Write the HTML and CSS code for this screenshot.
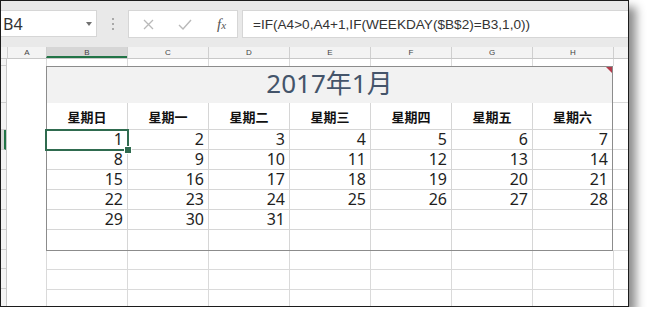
FILE: index.html
```html
<!DOCTYPE html>
<html lang="zh-CN">
<head>
  <meta charset="UTF-8" />
  <title>万年历 2017年1月</title>
  <link rel="stylesheet" href="styles.css">
</head>
<body>

  <div class="ventana">
    <div class="franja"></div>

    <div class="barra-formula">
      <div class="cuadro-nombre">
        <span>B4</span>
        <span class="flecha"></span>
      </div>
      <div class="puntos"><i></i><i></i><i></i></div>
      <div class="botones">
        <svg width="11" height="11" viewBox="0 0 11 11"><path d="M1 1L10 10M10 1L1 10" stroke="#b9b9b9" stroke-width="1.3" fill="none"/></svg>
        <svg width="14" height="11" viewBox="0 0 14 11"><path d="M1 6L5 10L13 1" stroke="#b9b9b9" stroke-width="1.4" fill="none"/></svg>
        <span class="fx">f<small>x</small></span>
      </div>
      <div class="formula">=IF(A4&gt;0,A4+1,IF(WEEKDAY($B$2)=B3,1,0))</div>
    </div>

    <div class="hueco"></div>

    <!-- cabecera de columnas -->
    <div class="cab-columnas">
      <div class="esquina"></div>
      <div class="letra col-a">A</div>
      <div class="letra activa">B</div>
      <div class="letra">C</div>
      <div class="letra">D</div>
      <div class="letra">E</div>
      <div class="letra">F</div>
      <div class="letra">G</div>
      <div class="letra">H</div>
      <div class="letra col-i"></div>
    </div>

    <div class="hoja">
      <div class="cab-filas">
        <div style="height:7px"></div>
        <div style="height:37px"></div>
        <div style="height:27px"></div>
        <div class="activa"></div>
        <div></div>
        <div></div>
        <div></div>
        <div></div>
        <div></div>
        <div style="height:19px"></div>
        <div></div>
        <div class="resto"></div>
      </div>

      <div class="cuerpo-a"></div>

      <div class="celdas">
        <div class="fila fila-1">
          <div></div><div></div><div></div><div></div><div></div><div></div><div></div><div></div>
        </div>

        <div class="bloque">
          <div class="calendario">
            <div class="titulo">2017年1月</div>
            <div class="semana dias">
              <div>星期日</div><div>星期一</div><div>星期二</div><div>星期三</div><div>星期四</div><div>星期五</div><div>星期六</div>
            </div>
            <div class="semana">
              <div class="seleccion">1</div><div>2</div><div>3</div><div>4</div><div>5</div><div>6</div><div>7</div>
            </div>
            <div class="semana">
              <div>8</div><div>9</div><div>10</div><div>11</div><div>12</div><div>13</div><div>14</div>
            </div>
            <div class="semana">
              <div>15</div><div>16</div><div>17</div><div>18</div><div>19</div><div>20</div><div>21</div>
            </div>
            <div class="semana">
              <div>22</div><div>23</div><div>24</div><div>25</div><div>26</div><div>27</div><div>28</div>
            </div>
            <div class="semana">
              <div>29</div><div>30</div><div>31</div><div></div><div></div><div></div><div></div>
            </div>
            <div class="semana">
              <div></div><div></div><div></div><div></div><div></div><div></div><div></div>
            </div>
          </div>

          <div class="col-i-pila">
            <div style="height:37px"></div>
            <div style="height:27px"></div>
            <div></div><div></div><div></div><div></div><div></div>
            <div style="height:21px"></div>
          </div>
        </div>

        <div class="fila" style="height:19px">
          <div></div><div></div><div></div><div></div><div></div><div></div><div></div><div></div>
        </div>
        <div class="fila">
          <div></div><div></div><div></div><div></div><div></div><div></div><div></div><div></div>
        </div>
        <div class="fila resto">
          <div></div><div></div><div></div><div></div><div></div><div></div><div></div><div></div>
        </div>
      </div>
    </div>
  </div>

</body>
</html>
```

FILE: styles.css
```css
* {
  box-sizing: border-box;
}

body {
  margin: 0;
  background: #fff;
  font-family: "Noto Sans", "Noto Sans CJK SC", sans-serif;
  color: #222;
}

.ventana {
  width: 629px;
  height: 307px;
  border: 1px solid #1c1c1c;
  background: #e9e9e9;
  box-shadow: 7px 7px 9px rgba(0,0,0,0.45);
  display: flex;
  flex-direction: column;
  overflow: hidden;
}

.franja {
  height: 9px;
}

/* barra de formulas */
.barra-formula {
  height: 28px;
  display: flex;
}

.cuadro-nombre {
  width: 96px;
  height: 27px;
  background: #fff;
  border: 1px solid #d6d6d6;
  border-left: none;
  display: flex;
  align-items: center;
  justify-content: space-between;
  padding: 0 4px 0 2px;
  font-size: 16px;
  color: #333;
}

.flecha {
  width: 0;
  height: 0;
  border-left: 3.5px solid transparent;
  border-right: 3.5px solid transparent;
  border-top: 4px solid #707070;
}

.puntos {
  width: 31px;
  display: flex;
  flex-direction: column;
  align-items: center;
  justify-content: center;
  gap: 3px;
}

.puntos i {
  width: 2px;
  height: 2px;
  background: #a9a9a9;
}

.botones {
  width: 110px;
  background: #fff;
  border: 1px solid #d6d6d6;
  display: flex;
  align-items: center;
  padding: 0 0 0 14px;
  gap: 24px;
}

.fx {
  font-family: "Liberation Serif", serif;
  font-style: italic;
  font-size: 15px;
  color: #555;
  margin-left: 1px;
}

.fx small {
  font-size: 11px;
}

.formula {
  flex: 1;
  margin-left: 4px;
  background: #fff;
  border: 1px solid #d6d6d6;
  border-right: none;
  padding-left: 10px;
  display: flex;
  align-items: center;
  font-family: "Liberation Sans", sans-serif;
  font-size: 13.6px;
  color: #333;
}

.hueco {
  height: 9px;
}

/* cabecera de columnas */
.cab-columnas {
  height: 12px;
  display: flex;
  background: #f3f3f3;
  border-bottom: 1px solid #c8c8c8;
}

.esquina {
  width: 6px;
  flex-shrink: 0;
}

.letra {
  width: 81px;
  flex-shrink: 0;
  border-left: 1px solid #cfcfcf;
  font-family: "Liberation Sans", sans-serif;
  font-size: 8px;
  line-height: 11px;
  text-align: center;
  color: #444;
}

.letra.col-a {
  width: 39px;
}

.letra.col-i {
  flex: 1;
}

.letra.activa {
  background: #d6d6d6;
  border-bottom: 2px solid #217346;
}

/* hoja */
.hoja {
  flex: 1;
  display: flex;
  background: #fff;
}

.cab-filas {
  width: 6px;
  flex-shrink: 0;
  background: #f4f4f4;
  border-right: 1px solid #c8c8c8;
  display: flex;
  flex-direction: column;
}

.cab-filas div {
  height: 20px;
  flex-shrink: 0;
  border-bottom: 1px solid #cfcfcf;
}

.cab-filas .activa {
  background: #d6d6d6;
  border-right: 2px solid #217346;
}

.cab-filas .resto {
  flex: 1;
  border-bottom: none;
}

.cuerpo-a {
  width: 39px;
  flex-shrink: 0;
}

.celdas {
  flex: 1;
  min-width: 0;
  display: flex;
  flex-direction: column;
}

.fila {
  height: 20px;
  flex-shrink: 0;
  display: flex;
  border-bottom: 1px solid #dadada;
}

.fila-1 {
  height: 7px;
  border-bottom: none;
}

.fila.resto {
  flex: 1;
  border-bottom: none;
}

.fila div {
  width: 81px;
  flex-shrink: 0;
  border-left: 1px solid #dadada;
}

.fila div:last-child {
  flex: 1;
}

.bloque {
  display: flex;
  flex-shrink: 0;
}

.calendario {
  width: 567px;
  flex-shrink: 0;
  border: 1px solid #8c8c8c;
}

.titulo {
  position: relative;
  height: 36px;
  background: #f2f2f2;
  text-align: center;
  font-size: 26px;
  line-height: 33px;
  color: #44546a;
}

/* indicador de comentario */
.titulo::after {
  content: "";
  position: absolute;
  top: 0;
  right: 0;
  border-top: 6px solid #b43a4b;
  border-left: 6px solid transparent;
}

.semana {
  height: 20px;
  display: flex;
  border-bottom: 1px solid #d6d6d6;
}

.semana:last-child {
  border-bottom: none;
}

.semana div {
  width: 81px;
  flex-shrink: 0;
  border-left: 1px solid #d6d6d6;
  text-align: right;
  padding-right: 4px;
  font-size: 16px;
  line-height: 19px;
  color: #1e1e1e;
}

.semana div:first-child {
  width: 80px;
  border-left: none;
}

.semana div:last-child {
  width: 80px;
}

.semana.dias {
  height: 27px;
}

.semana.dias div {
  text-align: center;
  padding-right: 0;
  font-family: "Noto Sans CJK SC", sans-serif;
  font-weight: bold;
  font-size: 13px;
  line-height: 27px;
  color: #111;
}

.seleccion {
  position: relative;
}

.seleccion::after {
  content: "";
  position: absolute;
  top: -1px;
  left: -2px;
  right: -2px;
  bottom: -2px;
  border: 2px solid #2f6b4f;
}

.seleccion::before {
  content: "";
  position: absolute;
  right: -5px;
  bottom: -5px;
  width: 6px;
  height: 6px;
  background: #2f6b4f;
  border: 1px solid #fff;
  z-index: 2;
}

.col-i-pila {
  flex: 1;
  display: flex;
  flex-direction: column;
}

.col-i-pila div {
  height: 20px;
  flex-shrink: 0;
  border-bottom: 1px solid #dadada;
}
```
